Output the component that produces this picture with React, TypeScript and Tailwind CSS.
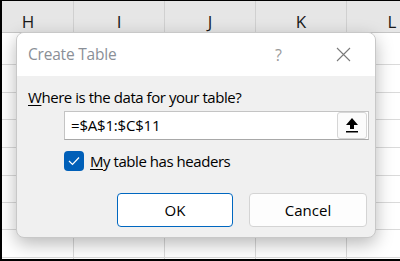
import { Fragment } from 'react'

const columns = ['H', 'I', 'J', 'K', 'L']
const rowHeights = [32, 28, 27, 28, 28, 27, 27, 28, 28]

function UploadIcon() {
  return (
    <svg width="12" height="15" viewBox="0 0 12 15" fill="#000">
      <path d="M6 0 L12 7 L8 7 L8 11 L4 11 L4 7 L0 7 Z" />
      <rect x="0" y="13" width="12" height="1.5" />
    </svg>
  )
}

export default function App() {
  return (
    <div
      className="relative w-[400px] h-[261px] overflow-hidden bg-white border-t border-l-2 border-b-2 border-black"
      style={{ fontFamily: '"Open Sans", "Noto Sans", sans-serif' }}
    >
      {/* Sheet header */}
      <div className="flex h-[32px] -ml-[19px] bg-[#e6e6e6] border-b border-[#c6c6c6]">
        {columns.map((c) => (
          <div
            key={c}
            className="w-[91px] shrink-0 flex items-end justify-center pb-[2px] border-r border-[#d0d0d0] text-[17px] leading-none text-[#1a1a1a]"
          >
            {c}
          </div>
        ))}
      </div>

      {/* Sheet rows */}
      <div className="flex flex-col">
        {rowHeights.map((h, i) => (
          <div key={i} className="flex -ml-[19px] border-b border-[#dadada]" style={{ height: h }}>
            {columns.map((c) => (
              <Fragment key={c}>
                <div className="w-[91px] shrink-0 border-r border-[#dadada]" />
              </Fragment>
            ))}
          </div>
        ))}
      </div>

      {/* Dialog */}
      <div className="absolute left-[14px] top-[31px] w-[360px] h-[206px] rounded-[8px] border border-[#c8c8c8] bg-[#f0f0f0] overflow-hidden shadow-[0_6px_18px_rgba(0,0,0,0.28)] flex flex-col">
        <div className="h-[43px] bg-white flex items-center pl-[11px] pr-[24px] shrink-0">
          <span className="text-[15.5px] text-[#8a8f97] tracking-[-0.2px]">Create Table</span>
          <span className="ml-auto text-[16px] text-[#9a9a9a] mr-[54px]">?</span>
          <svg width="15" height="15" viewBox="0 0 15 15" stroke="#7a7a7a" strokeWidth="1.1" fill="none">
            <path d="M1 1 L14 14 M14 1 L1 14" />
          </svg>
        </div>

        <div className="flex-1 flex flex-col pl-[11px] pr-[8px] pt-[11px]">
          <div className="text-[15px] leading-[20px] text-black tracking-[-0.45px]">
            <span className="underline underline-offset-2">W</span>here is the data for your table?
          </div>

          <div className="mt-[4px] ml-[36px] w-[305px] h-[29px] bg-white border border-[#c4c4c4] border-b-[#a8a8a8] flex items-center pl-[6px] pr-[1px]">
            <span className="text-[15px] text-black tracking-[-0.2px]">=$A$1:$C$11</span>
            <button className="ml-auto w-[30px] h-[27px] rounded-[3px] border border-[#d6d6d6] bg-[#fbfbfb] flex items-center justify-center">
              <UploadIcon />
            </button>
          </div>

          <div className="mt-[11px] ml-[36px] flex items-center gap-[6px] h-[20px]">
            <div className="w-[20px] h-[20px] rounded-[4px] bg-[#005fb8] flex items-center justify-center">
              <svg width="12" height="10" viewBox="0 0 12 10" fill="none" stroke="#fff" strokeWidth="1.2">
                <path d="M1 5 L4.5 8.5 L11 1.5" />
              </svg>
            </div>
            <span className="text-[15px] leading-[20px] text-black tracking-[-0.45px]">
              <span className="underline underline-offset-2">M</span>y table has headers
            </span>
          </div>

          <div className="mt-auto mb-[10px] flex justify-end gap-[16px]">
            <button className="w-[116px] h-[34px] rounded-[4px] border border-[#0067c0] bg-white text-[15px] text-black">
              OK
            </button>
            <button className="w-[118px] h-[34px] rounded-[4px] border border-[#d4d4d4] bg-[#fdfdfd] text-[15px] text-black">
              Cancel
            </button>
          </div>
        </div>
      </div>
    </div>
  )
}
